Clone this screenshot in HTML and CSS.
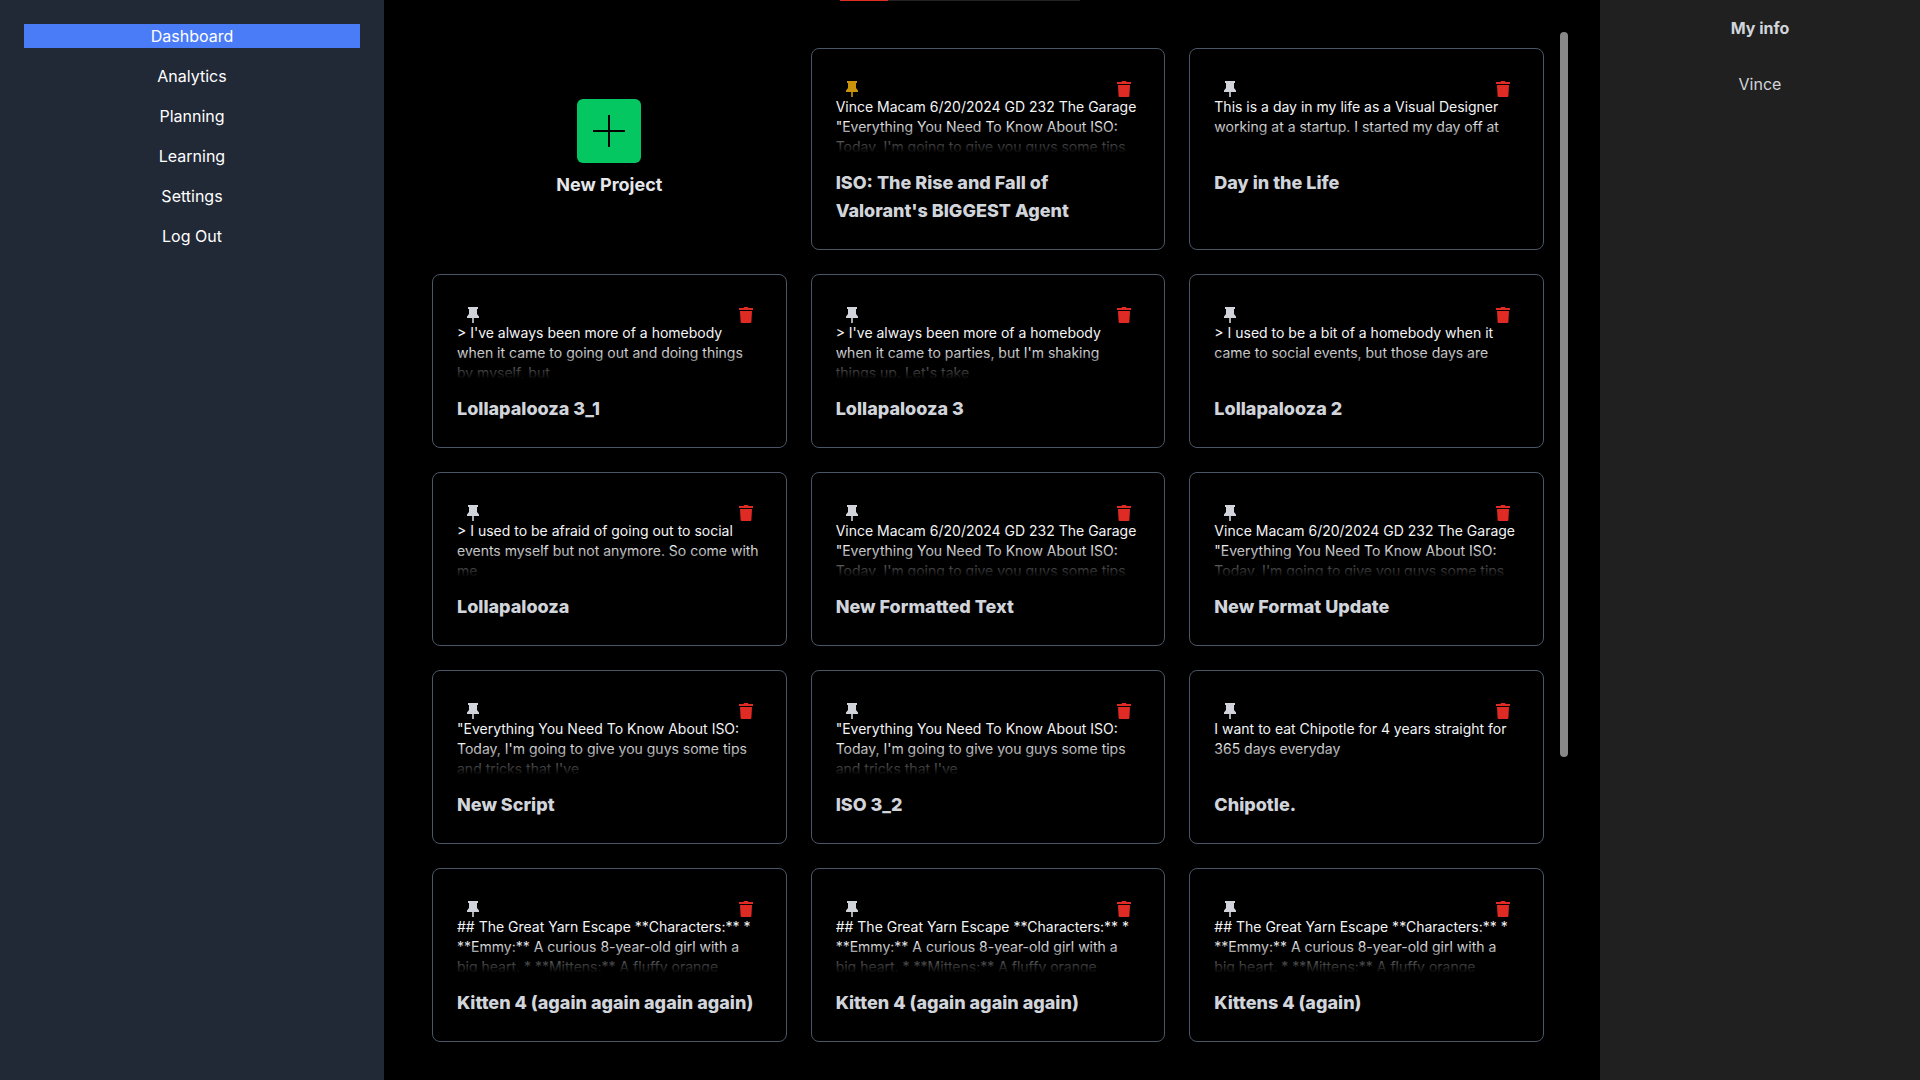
FILE: index.html
```html
<!DOCTYPE html>
<html lang="en">

<head>
  <meta charset="UTF-8">
  <meta name="viewport" content="width=device-width, initial-scale=1.0">
  <title>Dashboard</title>
  <link rel="stylesheet" href="styles.css">
</head>

<body>
  <svg class="sprite" aria-hidden="true">
    <symbol id="pin" viewBox="0 0 16 16">
      <path d="M3 0h10v2h-1v5l2 2.600V11H8.800v5H7.200v-5H2V9.600L4 7V2H3z" />
    </symbol>
    <symbol id="trash" viewBox="0 0 16 16">
      <path d="M1 1h4.500L6 0h4l.5 1H15v2H1zM2 4h12l-.6 11q-.1 1-1 1H3.600q-.9 0-1-1z" />
    </symbol>
  </svg>

  <div class="progress">
    <div class="progress-bar"></div>
  </div>

  <div class="layout">
    <nav class="sidebar">
      <a href="#" class="active">Dashboard</a>
      <a href="#">Analytics</a>
      <a href="#">Planning</a>
      <a href="#">Learning</a>
      <a href="#">Settings</a>
      <a href="#">Log Out</a>
    </nav>

    <main class="main">
      <div class="grid">
        <div class="new-project">
          <button type="button" id="newProject" aria-labelledby="newProjectLabel">
            <svg viewBox="0 0 32 32"><path d="M16 0v32M0 16h32" /></svg>
          </button>
          <label for="newProject" id="newProjectLabel">New Project</label>
        </div>

        <article class="card">
          <div class="actions">
            <button type="button" class="pin pinned" aria-label="Unpin"><svg><use href="#pin" /></svg></button>
            <button type="button" class="delete" aria-label="Delete"><svg><use href="#trash" /></svg></button>
          </div>
          <p class="preview">Vince Macam 6/20/2024 GD 232 The Garage "Everything You Need To Know About ISO: Today, I'm going to give you guys some tips</p>
          <h3>ISO: The Rise and Fall of Valorant's BIGGEST Agent</h3>
        </article>

        <article class="card">
          <div class="actions">
            <button type="button" class="pin" aria-label="Pin"><svg><use href="#pin" /></svg></button>
            <button type="button" class="delete" aria-label="Delete"><svg><use href="#trash" /></svg></button>
          </div>
          <p class="preview">This is a day in my life as a Visual Designer working at a startup. I started my day off at</p>
          <h3>Day in the Life</h3>
        </article>

        <article class="card">
          <div class="actions">
            <button type="button" class="pin" aria-label="Pin"><svg><use href="#pin" /></svg></button>
            <button type="button" class="delete" aria-label="Delete"><svg><use href="#trash" /></svg></button>
          </div>
          <p class="preview">&gt; I've always been more of a homebody when it came to going out and doing things by myself, but</p>
          <h3>Lollapalooza 3_1</h3>
        </article>

        <article class="card">
          <div class="actions">
            <button type="button" class="pin" aria-label="Pin"><svg><use href="#pin" /></svg></button>
            <button type="button" class="delete" aria-label="Delete"><svg><use href="#trash" /></svg></button>
          </div>
          <p class="preview">&gt; I've always been more of a homebody when it came to parties, but I'm shaking things up. Let's take</p>
          <h3>Lollapalooza 3</h3>
        </article>

        <article class="card">
          <div class="actions">
            <button type="button" class="pin" aria-label="Pin"><svg><use href="#pin" /></svg></button>
            <button type="button" class="delete" aria-label="Delete"><svg><use href="#trash" /></svg></button>
          </div>
          <p class="preview">&gt; I used to be a bit of a homebody when it came to social events, but those days are</p>
          <h3>Lollapalooza 2</h3>
        </article>

        <article class="card">
          <div class="actions">
            <button type="button" class="pin" aria-label="Pin"><svg><use href="#pin" /></svg></button>
            <button type="button" class="delete" aria-label="Delete"><svg><use href="#trash" /></svg></button>
          </div>
          <p class="preview">&gt; I used to be afraid of going out to social events myself but not anymore. So come with me</p>
          <h3>Lollapalooza</h3>
        </article>

        <article class="card">
          <div class="actions">
            <button type="button" class="pin" aria-label="Pin"><svg><use href="#pin" /></svg></button>
            <button type="button" class="delete" aria-label="Delete"><svg><use href="#trash" /></svg></button>
          </div>
          <p class="preview">Vince Macam 6/20/2024 GD 232 The Garage "Everything You Need To Know About ISO: Today, I'm going to give you guys some tips</p>
          <h3>New Formatted Text</h3>
        </article>

        <article class="card">
          <div class="actions">
            <button type="button" class="pin" aria-label="Pin"><svg><use href="#pin" /></svg></button>
            <button type="button" class="delete" aria-label="Delete"><svg><use href="#trash" /></svg></button>
          </div>
          <p class="preview">Vince Macam 6/20/2024 GD 232 The Garage "Everything You Need To Know About ISO: Today, I'm going to give you guys some tips</p>
          <h3>New Format Update</h3>
        </article>

        <article class="card">
          <div class="actions">
            <button type="button" class="pin" aria-label="Pin"><svg><use href="#pin" /></svg></button>
            <button type="button" class="delete" aria-label="Delete"><svg><use href="#trash" /></svg></button>
          </div>
          <p class="preview">"Everything You Need To Know About ISO: Today, I'm going to give you guys some tips and tricks that I've</p>
          <h3>New Script</h3>
        </article>

        <article class="card">
          <div class="actions">
            <button type="button" class="pin" aria-label="Pin"><svg><use href="#pin" /></svg></button>
            <button type="button" class="delete" aria-label="Delete"><svg><use href="#trash" /></svg></button>
          </div>
          <p class="preview">"Everything You Need To Know About ISO: Today, I'm going to give you guys some tips and tricks that I've</p>
          <h3>ISO 3_2</h3>
        </article>

        <article class="card">
          <div class="actions">
            <button type="button" class="pin" aria-label="Pin"><svg><use href="#pin" /></svg></button>
            <button type="button" class="delete" aria-label="Delete"><svg><use href="#trash" /></svg></button>
          </div>
          <p class="preview">I want to eat Chipotle for 4 years straight for 365 days everyday</p>
          <h3>Chipotle.</h3>
        </article>

        <article class="card">
          <div class="actions">
            <button type="button" class="pin" aria-label="Pin"><svg><use href="#pin" /></svg></button>
            <button type="button" class="delete" aria-label="Delete"><svg><use href="#trash" /></svg></button>
          </div>
          <p class="preview">## The Great Yarn Escape **Characters:** * **Emmy:** A curious 8-year-old girl with a big heart. * **Mittens:** A fluffy orange</p>
          <h3>Kitten 4 (again again again again)</h3>
        </article>

        <article class="card">
          <div class="actions">
            <button type="button" class="pin" aria-label="Pin"><svg><use href="#pin" /></svg></button>
            <button type="button" class="delete" aria-label="Delete"><svg><use href="#trash" /></svg></button>
          </div>
          <p class="preview">## The Great Yarn Escape **Characters:** * **Emmy:** A curious 8-year-old girl with a big heart. * **Mittens:** A fluffy orange</p>
          <h3>Kitten 4 (again again again)</h3>
        </article>

        <article class="card">
          <div class="actions">
            <button type="button" class="pin" aria-label="Pin"><svg><use href="#pin" /></svg></button>
            <button type="button" class="delete" aria-label="Delete"><svg><use href="#trash" /></svg></button>
          </div>
          <p class="preview">## The Great Yarn Escape **Characters:** * **Emmy:** A curious 8-year-old girl with a big heart. * **Mittens:** A fluffy orange</p>
          <h3>Kittens 4 (again)</h3>
        </article>
      </div>
      <div class="scrollbar">
        <div class="scrollbar-thumb"></div>
      </div>
    </main>

    <aside class="info">
      <h2>My info</h2>
      <p>Vince</p>
    </aside>
  </div>
</body>

</html>
```
FILE: styles.css
```css
* {
  box-sizing: border-box;
  padding: 0;
  margin: 0;
}

body {
  background: #000;
  color: #d1d5db;
  font-family: Inter, "Liberation Sans", sans-serif;
  font-size: 16px;
  line-height: 24px;
}

button {
  border: 0;
  background: none;
  cursor: pointer;
}

svg {
  display: block;
  fill: currentColor;
}

.sprite {
  display: none;
}

.layout {
  display: grid;
  grid-template-columns: 20% 1fr 16.6667%;
  height: 100vh;
}

/* loading bar on the top edge of the window */
.progress {
  position: fixed;
  top: 0;
  left: 50%;
  width: 240px;
  height: 1px;
  margin-left: -120px;
  background: #222;
}

.progress-bar {
  width: 20%;
  height: 100%;
  background: #e02d23;
}

/* sidebar */
.sidebar {
  display: flex;
  flex-direction: column;
  gap: 16px;
  padding: 24px;
  background: #212836;
  text-align: center;
}

.sidebar a {
  color: #fff;
  text-decoration: none;
}

.sidebar a.active {
  background: #4a7cf8;
}

/* projects */
.main {
  display: flex;
  min-height: 0;
  padding: 32px;
}

.grid {
  flex: 1;
  display: grid;
  grid-template-columns: repeat(3, 1fr);
  align-content: start;
  gap: 24px;
  padding: 16px;
  overflow-y: auto;
  scrollbar-width: none;
}

.scrollbar {
  width: 8px;
}

.scrollbar-thumb {
  height: 71.4%;
  border-radius: 4px;
  background: #888;
}

.new-project {
  display: flex;
  flex-direction: column;
  align-items: center;
  justify-content: center;
  gap: 8px;
}

.new-project button {
  width: 64px;
  height: 64px;
  padding: 16px;
  border-radius: 6px;
  background: #04c761;
}

.new-project svg {
  stroke: #000;
  stroke-width: 2;
}

.new-project label {
  color: #e5e7eb;
  font-size: 18px;
  font-weight: 700;
  line-height: 28px;
}

.card {
  padding: 24px;
  border: 1px solid #4a5565;
  border-radius: 8px;
}

.actions {
  display: flex;
  justify-content: space-between;
  height: 24px;
  padding: 0 8px;
}

.actions button {
  padding-top: 8px;
}

.actions svg {
  width: 16px;
  height: 16px;
}

.pin {
  color: #d1d5db;
}

.pinned {
  color: #c9940c;
}

.delete {
  color: #df2b24;
}

.preview {
  position: relative;
  height: 56px;
  margin-bottom: 16px;
  overflow: hidden;
  color: #f3f4f6;
  font-size: 14px;
  line-height: 20px;
}

/* fades the last lines out */
.preview::after {
  content: "";
  position: absolute;
  right: 0;
  bottom: 0;
  left: 0;
  height: 32px;
  background: linear-gradient(transparent, #000);
}

.card h3 {
  font-size: 18px;
  font-weight: 800;
  line-height: 28px;
}

/* user info */
.info {
  padding: 16px;
  background: #202020;
  text-align: center;
}

.info h2 {
  margin-bottom: 32px;
  font-size: 16px;
}
```
